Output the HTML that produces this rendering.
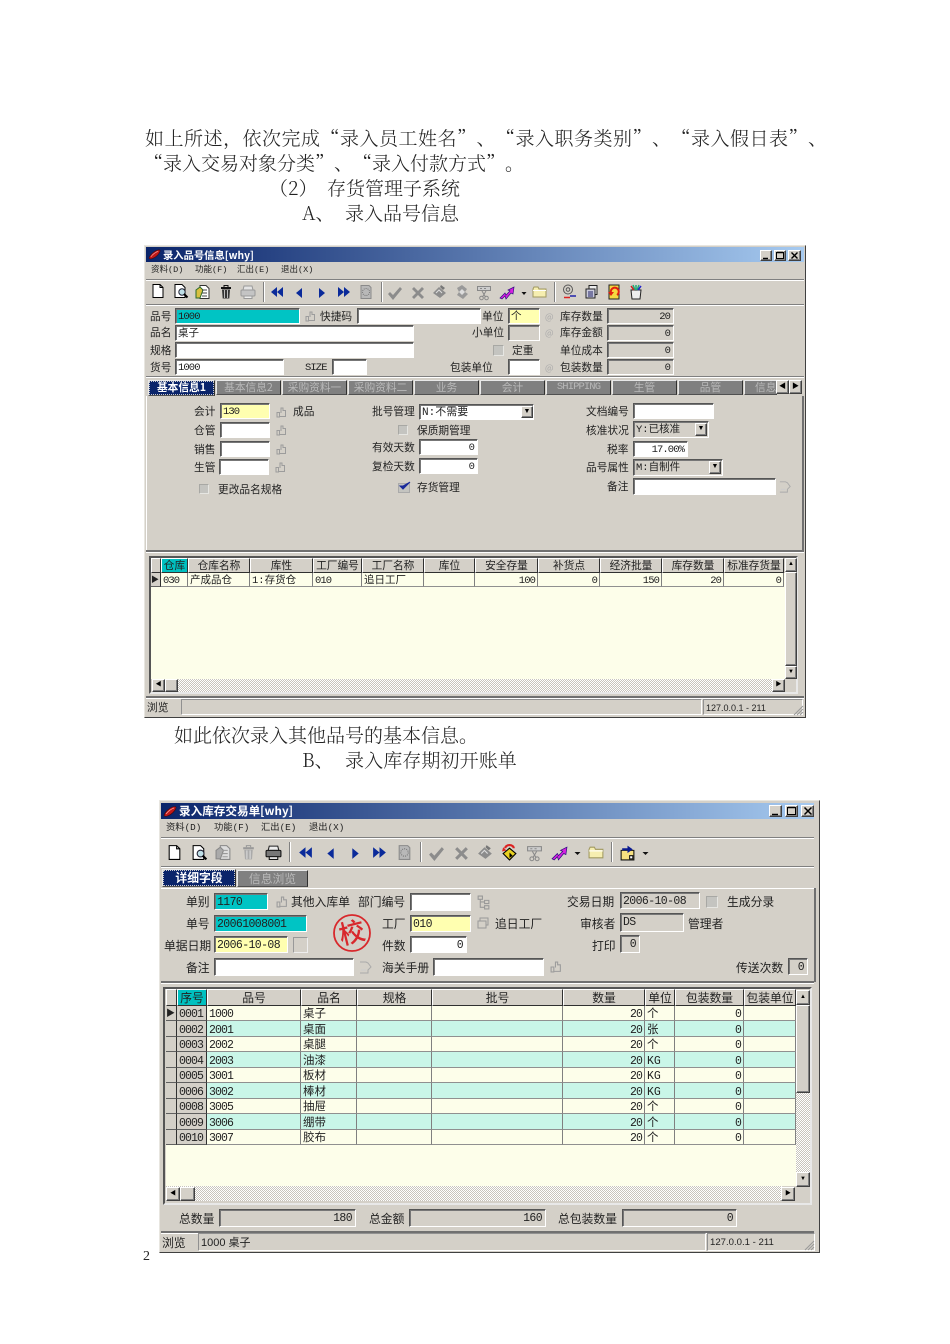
<!DOCTYPE html>
<html lang="zh-CN"><head><meta charset="utf-8"><title>存货管理子系统</title>
<style>
html,body{margin:0;padding:0;background:#fff}
body{position:relative;width:950px;height:1344px;overflow:hidden;font-family:"Liberation Sans","Noto Sans CJK SC",sans-serif}
.b{position:absolute;font:19px/24px "Noto Serif CJK SC",serif;color:#222;white-space:pre;margin-top:-12px;font-weight:300;text-spacing-trim:space-all}
.q{font-feature-settings:"fwid"}
.win{position:absolute;box-sizing:border-box;background:#d4d0c8;border:1px solid;border-color:#e8e6e0 #404040 #404040 #e8e6e0}
.a,.l,.f,.o,.tab{position:absolute}
.w1,.w2,svg.ic{filter:blur(.3px)}
.l{line-height:14px;margin-top:-6px;white-space:nowrap;color:#222;font-size:10.7px;font-family:"Noto Sans CJK SC",sans-serif}
.w2 .l{font-size:11.8px}
.mn{font-family:"Liberation Mono","Noto Sans CJK SC",monospace!important}
.m{font-family:"Liberation Mono",monospace;font-size:10.5px;letter-spacing:-.9px}
.title{position:absolute;background:linear-gradient(90deg,#0a246a,#a6caf0)}
.f{box-sizing:border-box;border:1px solid;border-color:#555 #fff #fff #555;background:#fff;box-shadow:inset 1px 1px 0 #777;font:10.5px/14px "Liberation Mono","Noto Sans CJK SC",monospace;letter-spacing:-.9px;color:#222;padding:1px 0 0 2px;white-space:nowrap;overflow:hidden}
.w2 .f{font-size:11.5px;line-height:15px;letter-spacing:-.6px}
.z{letter-spacing:0!important}
.y{background:#ffffb0}.c{background:#00c4c4}.g{background:#d4d0c8}
.r{text-align:right;padding:1px 3px 0 0}
.bt{position:absolute;box-sizing:border-box;background:#d4d0c8;border:1px solid;border-color:#fff #404040 #404040 #fff;box-shadow:inset -1px -1px 0 #808080;font:8px/9px "Liberation Sans",sans-serif;text-align:center;color:#000}
.hr{position:absolute;height:1px;background:#808080;box-shadow:0 1px 0 #fff}
.vr{position:absolute;width:1px;background:#808080;box-shadow:1px 0 0 #fff}
.tab{box-sizing:border-box;background:#808080;color:#b8b8b8;text-align:center;border:1px solid;border-color:#e8e8e8 #303030 #505050 #e8e8e8;font:10.7px/13px "Noto Sans CJK SC",sans-serif;white-space:nowrap;overflow:hidden}
.w2 .tab{font-size:11.8px;line-height:15px}
.sel{background:#0a246a;color:#fff;font-weight:700;outline:1px dotted #ccc;outline-offset:-2px}
.cb{position:absolute;box-sizing:border-box;background:#c4c4c0;border:1px solid #e6e6e2;border-top-color:#a8a8a4;border-left-color:#a8a8a4}
.fr{position:absolute;box-sizing:border-box;border:2px solid;border-color:#555 #e8e8e8 #e8e8e8 #555;background:#d4d0c8}
.dz{position:absolute;background:repeating-conic-gradient(#fff 0 25%,#c8c4bc 0 50%) 0 0/2px 2px}
table{position:absolute;border-collapse:separate;border-spacing:0;table-layout:fixed;font-family:"Liberation Mono","Noto Sans CJK SC",monospace;color:#222}
td,th{padding:0 2px;overflow:hidden;white-space:nowrap;box-sizing:border-box;font-weight:400;border-right:1px solid #808080;border-bottom:1px solid #909090;background:#fdfeea}
.w1 td{font-size:10.5px;line-height:10px;padding-top:3px;letter-spacing:-.9px}
.w2 td{font-size:11.5px;line-height:11px;padding-top:3px;letter-spacing:-.9px}
.w1 td:nth-child(3),.w1 td:nth-child(4),.w1 td:nth-child(6),.w2 td:nth-child(4),.w2 td:nth-child(8){letter-spacing:0}
th{background:#d4d0c8;border-top:1px solid #fff;border-left:1px solid #fff;border-right:1px solid #303030;border-bottom:1px solid #303030;font:10.7px/13px "Noto Sans CJK SC",sans-serif;text-align:center;padding:0}
.w2 th{font-size:11.8px}
th.k{background:#00c0c0}
td.h{background:#d4d0c8;border-right:1px solid #303030;border-bottom:1px solid #606060;padding-left:2px;padding-right:1px}
td.n{text-align:right}
tr.t td{background:#c9f6e8}
tr.t td.h{background:#d4d0c8}
svg.ic{position:absolute;left:0;top:0}
</style></head>
<body>
<div class="b q" style="left:145px;top:138px;letter-spacing:.5px">如上所述，依次完成“录入员工姓名”、“录入职务类别”、“录入假日表”、</div>
<div class="b q" style="left:144px;top:163px">“录入交易对象分类”、“录入付款方式”。</div>
<div class="b" style="left:269px;top:188px">（2）</div>
<div class="b" style="left:327px;top:188px">存货管理子系统</div>
<div class="b" style="left:302px;top:213px">A、</div>
<div class="b" style="left:345px;top:213px">录入品号信息</div>
<div class="b" style="left:174px;top:735px">如此依次录入其他品号的基本信息。</div>
<div class="b" style="left:302px;top:760px">B、</div>
<div class="b" style="left:345px;top:760px;letter-spacing:.1px">录入库存期初开账单</div>
<div class="b" style="left:143px;top:1257px;font:14px/24px 'Liberation Serif',serif;font-weight:400">2</div>

<!-- WINDOW 1 -->
<div class="win" style="left:144px;top:245px;width:662px;height:473px"></div>
<div class="w1">
<div class="title" style="left:146px;top:247px;width:658px;height:15px"></div>
<div class="l" style="left:163px;top:254px;color:#fff;font-weight:700;font-size:10.3px">录入品号信息[why]</div>
<div class="bt" style="left:760px;top:250px;width:12px;height:11px"></div>
<div class="bt" style="left:774px;top:250px;width:12px;height:11px"></div>
<div class="bt" style="left:788px;top:250px;width:13px;height:11px"></div>
<div class="l mn" style="left:151px;top:269px;font-size:8.5px">资料(D)</div>
<div class="l mn" style="left:195px;top:269px;font-size:8.5px">功能(F)</div>
<div class="l mn" style="left:237px;top:269px;font-size:8.5px">汇出(E)</div>
<div class="l mn" style="left:281px;top:269px;font-size:8.5px">退出(X)</div>
<div class="hr" style="left:146px;top:279px;width:658px"></div>
<div class="hr" style="left:146px;top:304px;width:658px"></div>
<div class="vr" style="left:263px;top:282px;height:20px"></div>
<div class="vr" style="left:381px;top:282px;height:20px"></div>
<div class="vr" style="left:554px;top:282px;height:20px"></div>

<div class="l" style="left:150px;top:316px">品号</div><div class="f c" style="left:175px;top:308px;width:125px;height:16px">1000</div>
<div class="l" style="left:320px;top:316px">快捷码</div><div class="f" style="left:357px;top:308px;width:124px;height:16px"></div>
<div class="l" style="left:482px;top:316px">单位</div><div class="f y z" style="left:508px;top:308px;width:32px;height:16px">个</div>
<div class="l" style="left:545px;top:316px;color:#aaa;font-size:9px">@</div>
<div class="l" style="left:560px;top:316px">库存数量</div><div class="f g r" style="left:607px;top:308px;width:67px;height:16px">20</div>

<div class="l" style="left:150px;top:332px">品名</div><div class="f z" style="left:175px;top:325px;width:239px;height:16px">桌子</div>
<div class="l" style="left:472px;top:332px">小单位</div><div class="f g" style="left:508px;top:325px;width:32px;height:16px"></div>
<div class="l" style="left:545px;top:332px;color:#aaa;font-size:9px">@</div>
<div class="l" style="left:560px;top:332px">库存金额</div><div class="f g r" style="left:607px;top:325px;width:67px;height:16px">0</div>

<div class="l" style="left:150px;top:350px">规格</div><div class="f" style="left:175px;top:342px;width:239px;height:16px"></div>
<div class="cb" style="left:493px;top:345px;width:11px;height:11px"></div><div class="l" style="left:512px;top:350px">定重</div>
<div class="l" style="left:560px;top:350px">单位成本</div><div class="f g r" style="left:607px;top:342px;width:67px;height:16px">0</div>

<div class="l" style="left:150px;top:367px">货号</div><div class="f" style="left:175px;top:359px;width:109px;height:16px">1000</div>
<div class="l m" style="left:305px;top:367px">SIZE</div><div class="f" style="left:332px;top:359px;width:35px;height:16px"></div>
<div class="l" style="left:450px;top:367px">包装单位</div><div class="f" style="left:508px;top:359px;width:32px;height:16px"></div>
<div class="l" style="left:545px;top:367px;color:#aaa;font-size:9px">@</div>
<div class="l" style="left:560px;top:367px">包装数量</div><div class="f g r" style="left:607px;top:359px;width:67px;height:16px">0</div>
<div class="hr" style="left:146px;top:376px;width:658px"></div>

<div class="tab sel" style="left:148px;top:380px;width:67px;height:16px">基本信息1</div>
<div class="tab" style="left:216px;top:380px;width:65px;height:15px">基本信息2</div>
<div class="tab" style="left:282px;top:380px;width:65px;height:15px">采购资料一</div>
<div class="tab" style="left:348px;top:380px;width:65px;height:15px">采购资料二</div>
<div class="tab" style="left:414px;top:380px;width:65px;height:15px">业务</div>
<div class="tab" style="left:480px;top:380px;width:65px;height:15px">会计</div>
<div class="tab" style="left:546px;top:380px;width:65px;height:15px;font-family:'Liberation Mono',monospace;font-size:10.5px;letter-spacing:-.9px">SHIPPING</div>
<div class="tab" style="left:612px;top:380px;width:65px;height:15px">生管</div>
<div class="tab" style="left:678px;top:380px;width:65px;height:15px">品管</div>
<div class="tab" style="left:744px;top:380px;width:33px;height:15px;text-align:left;padding-left:10px">信息</div>
<div class="bt" style="left:776px;top:380px;width:13px;height:14px;font-size:7px;line-height:12px">◀</div>
<div class="bt" style="left:789px;top:380px;width:13px;height:14px;font-size:7px;line-height:12px">▶</div>
<div class="a" style="left:146px;top:396px;width:1px;height:154px;background:#fff"></div>
<div class="a" style="left:802px;top:396px;width:2px;height:154px;background:#707070"></div>

<div class="l" style="left:194px;top:411px">会计</div><div class="f y" style="left:220px;top:403px;width:50px;height:16px">130</div><div class="l" style="left:293px;top:411px">成品</div>
<div class="l" style="left:194px;top:430px">仓管</div><div class="f" style="left:220px;top:422px;width:50px;height:16px"></div>
<div class="l" style="left:194px;top:449px">销售</div><div class="f" style="left:220px;top:441px;width:50px;height:16px"></div>
<div class="l" style="left:194px;top:467px">生管</div><div class="f" style="left:219px;top:459px;width:50px;height:16px"></div>
<div class="cb" style="left:199px;top:484px;width:10px;height:10px"></div><div class="l" style="left:218px;top:489px">更改品名规格</div>

<div class="l" style="left:372px;top:411px">批号管理</div><div class="f z" style="left:419px;top:404px;width:115px;height:16px;font-size:11px">N:不需要</div>
<div class="bt" style="left:521px;top:406px;width:12px;height:12px;line-height:10px;font-size:7px">▼</div>
<div class="cb" style="left:398px;top:425px;width:10px;height:10px"></div><div class="l" style="left:417px;top:430px">保质期管理</div>
<div class="l" style="left:372px;top:447px">有效天数</div><div class="f r" style="left:419px;top:439px;width:59px;height:16px">0</div>
<div class="l" style="left:372px;top:466px">复检天数</div><div class="f r" style="left:419px;top:458px;width:59px;height:16px">0</div>
<div class="l" style="left:417px;top:487px">存货管理</div>

<div class="l" style="left:586px;top:411px">文档编号</div><div class="f" style="left:633px;top:403px;width:81px;height:16px"></div>
<div class="l" style="left:586px;top:430px">核准状况</div><div class="f g z" style="left:633px;top:421px;width:76px;height:17px">Y:已核准</div>
<div class="bt" style="left:695px;top:423px;width:12px;height:13px;line-height:10px;font-size:7px">▼</div>
<div class="l" style="left:607px;top:449px">税率</div><div class="f r" style="left:633px;top:441px;width:55px;height:16px">17.00%</div>
<div class="l" style="left:586px;top:467px">品号属性</div><div class="f g z" style="left:633px;top:459px;width:90px;height:17px">M:自制件</div>
<div class="bt" style="left:709px;top:461px;width:12px;height:13px;line-height:10px;font-size:7px">▼</div>
<div class="l" style="left:607px;top:486px">备注</div><div class="f" style="left:633px;top:478px;width:143px;height:17px"></div>

<div class="hr" style="left:146px;top:550px;width:658px;height:2px;background:#707070"></div>
<div class="fr" style="left:149px;top:556px;width:649px;height:138px"></div>
<div class="a" style="left:151px;top:573px;width:634px;height:106px;background:#fdfeea"></div>
<table style="left:151px;top:558px;width:633px">
<colgroup><col style="width:10px"><col style="width:27px"><col style="width:62px"><col style="width:63px"><col style="width:49px"><col style="width:62px"><col style="width:51px"><col style="width:63px"><col style="width:62px"><col style="width:62px"><col style="width:62px"><col style="width:60px"></colgroup>
<tr style="height:15px"><th></th><th class="k">仓库</th><th>仓库名称</th><th>库性</th><th>工厂编号</th><th>工厂名称</th><th>库位</th><th>安全存量</th><th>补货点</th><th>经济批量</th><th>库存数量</th><th>标准存货量</th></tr>
<tr style="height:14px"><td class="h" style="font-size:8px;padding:2px 0 0">▶</td><td>030</td><td>产成品仓</td><td>1:存货仓</td><td>010</td><td>追日工厂</td><td></td><td class="n">100</td><td class="n">0</td><td class="n">150</td><td class="n">20</td><td class="n">0</td></tr>
</table>
<div class="bt" style="left:785px;top:558px;width:12px;height:14px;font-size:6px;line-height:11px">▲</div>
<div class="bt" style="left:785px;top:572px;width:12px;height:94px"></div>
<div class="bt" style="left:785px;top:666px;width:12px;height:13px;font-size:6px;line-height:11px">▼</div>
<div class="dz" style="left:152px;top:679px;width:620px;height:13px"></div>
<div class="bt" style="left:152px;top:679px;width:13px;height:13px;font-size:6px;line-height:11px">◀</div>
<div class="bt" style="left:165px;top:679px;width:13px;height:13px"></div>
<div class="bt" style="left:772px;top:679px;width:13px;height:13px;font-size:6px;line-height:11px">▶</div>
<div class="hr" style="left:146px;top:696px;width:658px;height:2px;background:#707070"></div>
<div class="l" style="left:147px;top:707px">浏览</div>
<div class="f g" style="left:181px;top:699px;width:521px;height:16px;box-shadow:none;border-color:#909090 #fff #fff #909090"></div>
<div class="f g z" style="left:703px;top:699px;width:100px;height:16px;box-shadow:none;border-color:#909090 #fff #fff #909090;font:9px/14px 'Liberation Sans',sans-serif">127.0.0.1 - 211</div>
</div>

<!-- WINDOW 2 -->
<div class="win" style="left:159px;top:800px;width:661px;height:453px"></div>
<div class="w2">
<div class="title" style="left:161px;top:803px;width:653px;height:16px"></div>
<div class="l" style="left:179px;top:810px;color:#fff;font-weight:700;font-size:11.6px">录入库存交易单[why]</div>
<div class="bt" style="left:769px;top:805px;width:13px;height:12px"></div>
<div class="bt" style="left:785px;top:805px;width:13px;height:12px"></div>
<div class="bt" style="left:801px;top:805px;width:13px;height:12px"></div>
<div class="l mn" style="left:166px;top:827px;font-size:9.3px">资料(D)</div>
<div class="l mn" style="left:214px;top:827px;font-size:9.3px">功能(F)</div>
<div class="l mn" style="left:261px;top:827px;font-size:9.3px">汇出(E)</div>
<div class="l mn" style="left:309px;top:827px;font-size:9.3px">退出(X)</div>
<div class="hr" style="left:161px;top:837px;width:653px"></div>
<div class="hr" style="left:161px;top:866px;width:653px"></div>
<div class="vr" style="left:289px;top:842px;height:20px"></div>
<div class="vr" style="left:420px;top:842px;height:20px"></div>
<div class="vr" style="left:611px;top:842px;height:20px"></div>
<div class="tab sel" style="left:162px;top:869px;width:74px;height:18px;line-height:16px">详细字段</div>
<div class="tab" style="left:237px;top:870px;width:71px;height:17px">信息浏览</div>
<div class="a" style="left:161px;top:888px;width:653px;height:1px;background:#fff"></div>
<div class="a" style="left:814px;top:888px;width:2px;height:94px;background:#707070"></div>

<div class="l" style="left:186px;top:901px">单别</div><div class="f c" style="left:214px;top:893px;width:54px;height:17px">1170</div>
<div class="l" style="left:291px;top:901px">其他入库单</div>
<div class="l" style="left:358px;top:901px">部门编号</div><div class="f" style="left:410px;top:893px;width:61px;height:18px"></div>
<div class="l" style="left:567px;top:901px">交易日期</div><div class="f g" style="left:620px;top:892px;width:80px;height:17px">2006-10-08</div>
<div class="cb" style="left:706px;top:896px;width:12px;height:12px"></div><div class="l" style="left:727px;top:901px">生成分录</div>

<div class="l" style="left:186px;top:923px">单号</div><div class="f c" style="left:214px;top:915px;width:93px;height:17px">20061008001</div>
<div class="l" style="left:382px;top:923px">工厂</div><div class="f y" style="left:410px;top:915px;width:61px;height:17px">010</div>
<div class="l" style="left:495px;top:923px">追日工厂</div>
<div class="l" style="left:580px;top:923px">审核者</div><div class="f g" style="left:620px;top:913px;width:64px;height:19px">DS</div><div class="l" style="left:688px;top:923px">管理者</div>

<div class="l" style="left:164px;top:945px">单据日期</div><div class="f y" style="left:214px;top:936px;width:74px;height:17px">2006-10-08</div>
<div class="f g" style="left:293px;top:937px;width:15px;height:16px;border-color:#999 #eee #eee #999;box-shadow:none"></div>
<div class="l" style="left:382px;top:945px">件数</div><div class="f r" style="left:410px;top:936px;width:57px;height:17px">0</div>
<div class="l" style="left:592px;top:945px">打印</div><div class="f g r" style="left:620px;top:935px;width:20px;height:18px">0</div>

<div class="l" style="left:186px;top:967px">备注</div><div class="f" style="left:214px;top:958px;width:140px;height:18px"></div>
<div class="l" style="left:382px;top:967px">海关手册</div><div class="f" style="left:433px;top:958px;width:111px;height:18px"></div>
<div class="l" style="left:736px;top:967px">传送次数</div><div class="f g r" style="left:788px;top:958px;width:20px;height:17px">0</div>
<div class="hr" style="left:161px;top:981px;width:653px;height:2px;background:#707070"></div>

<div class="fr" style="left:163px;top:987px;width:649px;height:218px"></div>
<div class="a" style="left:166px;top:1005px;width:630px;height:181px;background:#fdfeea"></div>
<table style="left:166px;top:989px;width:630px">
<colgroup><col style="width:11px"><col style="width:30px"><col style="width:94px"><col style="width:56px"><col style="width:75px"><col style="width:131px"><col style="width:82px"><col style="width:30px"><col style="width:69px"><col style="width:52px"></colgroup>
<tr style="height:17px"><th></th><th class="k">序号</th><th>品号</th><th>品名</th><th>规格</th><th>批号</th><th>数量</th><th>单位</th><th>包装数量</th><th>包装单位</th></tr>
<tr style="height:15px"><td class="h" style="font-size:9px;padding:2px 0 0">▶</td><td class="h">0001</td><td>1000</td><td>桌子</td><td></td><td></td><td class="n">20</td><td>个</td><td class="n">0</td><td></td></tr>
<tr class="t" style="height:16px"><td class="h"></td><td class="h">0002</td><td>2001</td><td>桌面</td><td></td><td></td><td class="n">20</td><td>张</td><td class="n">0</td><td></td></tr>
<tr style="height:15px"><td class="h"></td><td class="h">0003</td><td>2002</td><td>桌腿</td><td></td><td></td><td class="n">20</td><td>个</td><td class="n">0</td><td></td></tr>
<tr class="t" style="height:16px"><td class="h"></td><td class="h">0004</td><td>2003</td><td>油漆</td><td></td><td></td><td class="n">20</td><td>KG</td><td class="n">0</td><td></td></tr>
<tr style="height:15px"><td class="h"></td><td class="h">0005</td><td>3001</td><td>板材</td><td></td><td></td><td class="n">20</td><td>KG</td><td class="n">0</td><td></td></tr>
<tr class="t" style="height:16px"><td class="h"></td><td class="h">0006</td><td>3002</td><td>棒材</td><td></td><td></td><td class="n">20</td><td>KG</td><td class="n">0</td><td></td></tr>
<tr style="height:15px"><td class="h"></td><td class="h">0008</td><td>3005</td><td>抽屉</td><td></td><td></td><td class="n">20</td><td>个</td><td class="n">0</td><td></td></tr>
<tr class="t" style="height:16px"><td class="h"></td><td class="h">0009</td><td>3006</td><td>绷带</td><td></td><td></td><td class="n">20</td><td>个</td><td class="n">0</td><td></td></tr>
<tr style="height:15px"><td class="h"></td><td class="h">0010</td><td>3007</td><td>胶布</td><td></td><td></td><td class="n">20</td><td>个</td><td class="n">0</td><td></td></tr>
</table>
<div class="dz" style="left:796px;top:1005px;width:14px;height:168px"></div>
<div class="bt" style="left:796px;top:990px;width:14px;height:15px;font-size:6px;line-height:12px">▲</div>
<div class="bt" style="left:796px;top:1005px;width:14px;height:88px"></div>
<div class="bt" style="left:796px;top:1172px;width:14px;height:15px;font-size:6px;line-height:12px">▼</div>
<div class="dz" style="left:166px;top:1186px;width:616px;height:15px"></div>
<div class="bt" style="left:166px;top:1187px;width:14px;height:14px;font-size:6px;line-height:12px">◀</div>
<div class="bt" style="left:180px;top:1187px;width:15px;height:14px"></div>
<div class="bt" style="left:781px;top:1187px;width:14px;height:14px;font-size:6px;line-height:12px">▶</div>

<div class="l" style="left:179px;top:1218px">总数量</div><div class="f g r" style="left:219px;top:1209px;width:137px;height:18px">180</div>
<div class="l" style="left:369px;top:1218px">总金额</div><div class="f g r" style="left:409px;top:1209px;width:137px;height:18px">160</div>
<div class="l" style="left:558px;top:1218px">总包装数量</div><div class="f g r" style="left:622px;top:1209px;width:115px;height:18px">0</div>
<div class="hr" style="left:161px;top:1231px;width:653px;height:2px;background:#707070"></div>
<div class="l" style="left:162px;top:1242px">浏览</div>
<div class="f g z" style="left:198px;top:1233px;width:508px;height:18px;box-shadow:none;border-color:#909090 #fff #fff #909090;font:11px/16px 'Liberation Sans','Noto Sans CJK SC',sans-serif">1000 桌子</div>
<div class="f g z" style="left:707px;top:1233px;width:108px;height:18px;box-shadow:none;border-color:#909090 #fff #fff #909090;font:9.6px/16px 'Liberation Sans',sans-serif">127.0.0.1 - 211</div>
</div>

<svg class="ic" width="950" height="1344" viewBox="0 0 950 1344" xmlns="http://www.w3.org/2000/svg">
<defs>
<symbol id="doc" viewBox="0 0 16 16"><path d="M3 1.5h7l3 3v10H3z" fill="#fff" stroke="#000"/><path d="M10 1.5v3h3" fill="none" stroke="#000"/></symbol>
<symbol id="pre" viewBox="0 0 16 16"><path d="M2 1.5h7l3 3v10H2z" fill="#fff" stroke="#000"/><circle cx="9" cy="9" r="3.2" fill="#bfe0e8" stroke="#223"/><path d="M11 11l3.5 3.5" stroke="#000" stroke-width="2"/></symbol>
<symbol id="cop" viewBox="0 0 16 16"><path d="M5 1.5h6l3 3v10H5z" fill="#fff" stroke="#333"/><path d="M1 6l4-3 3 3-3 8H1z" fill="#d8c040" stroke="#2a6a2a"/><path d="M7 6h5M7 9h5M7 12h5" stroke="#444"/></symbol>
<symbol id="cop2" viewBox="0 0 16 16"><path d="M5 1.5h6l3 3v10H5z" fill="#ddd" stroke="#888"/><path d="M1 6l4-3 3 3-3 8H1z" fill="#aaa" stroke="#888"/><path d="M7 6h5M7 9h5M7 12h5" stroke="#999"/></symbol>
<symbol id="tr" viewBox="0 0 16 16"><path d="M3 4h10" stroke="#111" stroke-width="2"/><path d="M6 3V1.5h4V3" fill="none" stroke="#111"/><path d="M4 5.5h8l-.7 9H4.7z" fill="#333"/><path d="M6.5 6v8M9.500 6v8" stroke="#bbb"/></symbol>
<symbol id="tr2" viewBox="0 0 16 16"><path d="M3 4h10" stroke="#999" stroke-width="2"/><path d="M6 3V1.5h4V3" fill="none" stroke="#999"/><path d="M4 5.5h8l-.7 9H4.7z" fill="#aaa"/><path d="M6.5 6v8M9.500 6v8" stroke="#ddd"/></symbol>
<symbol id="pr" viewBox="0 0 16 16"><path d="M4 2h8l1 4H3z" fill="#e4e4e4" stroke="#999"/><rect x="1" y="6" width="14" height="6" rx="1" fill="#c4c4c4" stroke="#999"/><path d="M4 12h8v2.500H4z" fill="#eee" stroke="#999"/></symbol>
<symbol id="pr2" viewBox="0 0 16 16"><path d="M4 2h8l1 4H3z" fill="#eee" stroke="#222"/><rect x="1" y="6" width="14" height="6" rx="1" fill="#777" stroke="#111"/><path d="M4 12h8v2.500H4z" fill="#fff" stroke="#111"/></symbol>
<symbol id="ff" viewBox="0 0 16 16"><path d="M8 3v10L2 8zM14 3v10L8 8z" fill="#0a2a9a"/></symbol>
<symbol id="pv" viewBox="0 0 16 16"><path d="M11 3v10L5 8z" fill="#0a2a9a"/></symbol>
<symbol id="nx" viewBox="0 0 16 16"><path d="M5 3v10l6-5z" fill="#0a2a9a"/></symbol>
<symbol id="ll" viewBox="0 0 16 16"><path d="M2 3v10l6-5zM8 3v10l6-5z" fill="#0a2a9a"/></symbol>
<symbol id="st" viewBox="0 0 16 16"><path d="M3 1.500h8l2 2v11H3z" fill="#b8b8b8" stroke="#8a8a8a"/><circle cx="8" cy="8" r="3.500" fill="none" stroke="#777" stroke-dasharray="1 1"/></symbol>
<symbol id="ck" viewBox="0 0 16 16"><path d="M1 9l2-2 3 3 7-8 2 2-9 11z" fill="#8c8c8c"/></symbol>
<symbol id="xx" viewBox="0 0 16 16"><path d="M2 4l2-2 4 4 4-4 2 2-4 4 4 4-2 2-4-4-4 4-2-2 4-4z" fill="#8c8c8c"/></symbol>
<symbol id="dm" viewBox="0 0 16 16"><path d="M1 9l6-6 7 6-6 5z" fill="#8c8c8c"/><path d="M9 1l4 3-2 2-3-3z" fill="#777"/><path d="M4 9l3-3 3 3" stroke="#ddd" fill="none"/></symbol>
<symbol id="dm2" viewBox="0 0 16 16"><path d="M3 4l5-3 5 4-2 3 3 2-5 5-6-4 2-3z" fill="#999"/><path d="M5 8l3-3 3 3-3 3z" fill="#ddd"/></symbol>
<symbol id="dm3" viewBox="0 0 16 16"><path d="M2 9l6-5 6 5-6 6z" fill="#e8d020" stroke="#000"/><path d="M4 4a4 3 0 0 1 8 0" fill="none" stroke="#d22" stroke-width="2"/><path d="M2 3l3 3-4 1z" fill="#d22"/><path d="M8 8l3 3-3 2z" fill="#000"/></symbol>
<symbol id="sc" viewBox="0 0 16 16"><path d="M1.500 1.500h13v4h-13z" fill="#ccc" stroke="#888"/><path d="M6 6l3.500 6M10 6l-3.500 6" stroke="#888"/><circle cx="5.500" cy="13" r="1.800" fill="none" stroke="#888"/><circle cx="10.500" cy="13" r="1.800" fill="none" stroke="#888"/><path d="M4 3.500h2M8 3.500h2" stroke="#888"/></symbol>
<symbol id="ar" viewBox="0 0 16 16"><path d="M1 13l5-5 1 2 4-4-2-1 6-3-1 7-2-1-5 6-1-3-3 3z" fill="#d820e0" stroke="#301080" stroke-width=".7"/></symbol>
<symbol id="fo" viewBox="0 0 16 16"><path d="M1 5l1-2h4l1 2h7v8H1z" fill="#f6eeb0" stroke="#a09860"/><path d="M1 6.500h13" stroke="#fff"/></symbol>
<symbol id="at" viewBox="0 0 16 16"><circle cx="7" cy="5.500" r="4.500" fill="none" stroke="#555"/><circle cx="7" cy="5.500" r="1.800" fill="none" stroke="#555"/><path d="M9 12h6" stroke="#22a" stroke-width="1.500"/><path d="M3 13.500h6" stroke="#d22" stroke-width="1.500"/></symbol>
<symbol id="bk" viewBox="0 0 16 16"><path d="M5 1.500h8v9H5z" fill="#eee" stroke="#222"/><path d="M2 5h9v9H2z" fill="#ccd" stroke="#222"/><path d="M4 8h5M4 10h5M4 12h5" stroke="#226"/></symbol>
<symbol id="rd" viewBox="0 0 16 16"><path d="M3 1h10v14H3z" fill="#f5d840" stroke="#222"/><path d="M5 9a4 4 0 1 1 6 2" fill="none" stroke="#e02010" stroke-width="2"/><path d="M2 8h6l-3 4z" fill="#e02010"/></symbol>
<symbol id="cu" viewBox="0 0 16 16"><path d="M3 6h10l-1 9H4z" fill="#eee" stroke="#222"/><path d="M5 1l2 5M8 1v5M11 1L9 6" stroke="#2a7" stroke-width="1.500"/><path d="M3 2l3 4" stroke="#c22" stroke-width="1.500"/><path d="M13 2l-3 4" stroke="#22c" stroke-width="1.500"/></symbol>
<symbol id="bx" viewBox="0 0 16 16"><path d="M2 6h12v9H2z" fill="#f6e080" stroke="#111"/><path d="M3 4h5V1.500l5 3.500-5 3.500V6H3z" fill="#0a1a90"/><path d="M10 11h3v3h-3z" fill="#fff" stroke="#111"/></symbol>
<symbol id="hk" viewBox="0 0 11 11"><path d="M1 5.500h2.500V10H1zM3.500 9.500h6V3.500H7V1H5v5" fill="none" stroke="#9c9c9c"/></symbol>
<symbol id="hd" viewBox="0 0 16 16"><path d="M2 3h6l2 1 3 4-3 3v3H2" fill="none" stroke="#aaa"/><path d="M3 11h5" stroke="#ccc"/></symbol>
<symbol id="tre" viewBox="0 0 12 14"><path d="M1 1h4v3H1zM7 5h4v3H7zM7 10h4v3H7zM3 4v7.500h4M3 6.500h4" fill="none" stroke="#999"/></symbol>
<symbol id="fac" viewBox="0 0 12 12"><path d="M1 4h8v7H1zM3 4V1h8v7H9" fill="none" stroke="#999"/></symbol>
<symbol id="ti" viewBox="0 0 14 12"><path d="M1 10C2 6 8 1 12 1c2 0 1 3-2 6s-8 5-9 3z" fill="#c01818" stroke="#40080c" stroke-width=".6"/><path d="M3 8.500C5 6 8 3.500 11 2.500" stroke="#f4a0a0" stroke-width=".8" fill="none"/></symbol>
</defs>
<use href="#ti" x="148" y="249" width="13" height="11"/>
<use href="#ti" x="163" y="805" width="14" height="13"/>
<!-- window buttons -->
<g fill="none" stroke="#000">
<path d="M763 258.500h5" stroke-width="1.500"/><rect x="776.500" y="252.500" width="7" height="6"/><path d="M777 252.500h6" stroke-width="1.500"/>
<path d="M791.500 252.500l6 6M797.500 252.500l-6 6" stroke-width="1.400"/>
<path d="M772 814.500h6" stroke-width="1.500"/><rect x="787.500" y="807.500" width="8" height="7"/><path d="M788 807.500h7" stroke-width="1.500"/>
<path d="M804.500 807.500l7 7M811.500 807.500l-7 7" stroke-width="1.500"/>
</g>
<!-- toolbar 1 -->
<g>
<use href="#doc" x="150" y="283" width="16" height="16"/>
<use href="#pre" x="173" y="283" width="16" height="16"/>
<use href="#cop" x="195" y="284" width="16" height="16"/>
<use href="#tr" x="218" y="284" width="16" height="16"/>
<use href="#pr" x="240" y="284" width="16" height="16"/>
<use href="#ff" x="269" y="284" width="16" height="16"/>
<use href="#pv" x="291" y="285" width="16" height="16"/>
<use href="#nx" x="314" y="285" width="16" height="16"/>
<use href="#ll" x="336" y="284" width="16" height="16"/>
<use href="#st" x="358" y="284" width="16" height="16"/>
<use href="#ck" x="387" y="285" width="16" height="16"/>
<use href="#xx" x="410" y="285" width="16" height="16"/>
<use href="#dm" x="432" y="284" width="16" height="16"/>
<use href="#dm2" x="454" y="284" width="16" height="16"/>
<use href="#sc" x="476" y="285" width="16" height="16"/>
<use href="#ar" x="499" y="285" width="16" height="16"/>
<path d="M521.500 292h5l-2.500 3z" fill="#111"/>
<use href="#fo" x="532" y="284" width="16" height="16"/>
<use href="#at" x="561" y="284" width="16" height="16"/>
<use href="#bk" x="584" y="284" width="16" height="16"/>
<use href="#rd" x="606" y="284" width="16" height="16"/>
<use href="#cu" x="628" y="284" width="16" height="16"/>
</g>
<!-- small icons 1 -->
<use href="#hk" x="305" y="311" width="11" height="11"/>
<use href="#hk" x="276" y="407" width="11" height="11"/>
<use href="#hk" x="276" y="425" width="11" height="11"/>
<use href="#hk" x="276" y="444" width="11" height="11"/>
<use href="#hk" x="275" y="462" width="11" height="11"/>
<use href="#hd" x="778" y="479" width="15" height="15"/>
<rect x="398.500" y="483.500" width="11" height="9" fill="#c4c4c0" stroke="#aaa"/>
<path d="M400 486l3 3 7-7-7 4z" fill="#1a2a9a" stroke="#1a2a9a"/>
<path d="M798 715l6-6M801 715l3-3M795 715l9-9" stroke="#999" transform="translate(-1 0)"/>
<!-- toolbar 2 -->
<g>
<use href="#doc" x="166" y="844" width="17" height="17"/>
<use href="#pre" x="191" y="844" width="17" height="17"/>
<use href="#cop2" x="215" y="844" width="17" height="17"/>
<use href="#tr2" x="240" y="844" width="17" height="17"/>
<use href="#pr2" x="265" y="844" width="17" height="17"/>
<use href="#ff" x="297" y="844" width="17" height="17"/>
<use href="#pv" x="322" y="845" width="17" height="17"/>
<use href="#nx" x="347" y="845" width="17" height="17"/>
<use href="#ll" x="371" y="844" width="17" height="17"/>
<use href="#st" x="396" y="844" width="17" height="17"/>
<use href="#ck" x="428" y="845" width="17" height="17"/>
<use href="#xx" x="453" y="845" width="17" height="17"/>
<use href="#dm" x="477" y="844" width="17" height="17"/>
<use href="#dm3" x="501" y="844" width="17" height="17"/>
<use href="#sc" x="526" y="845" width="17" height="17"/>
<use href="#ar" x="551" y="845" width="17" height="17"/>
<path d="M574.500 852h6l-3 3z" fill="#111"/>
<use href="#fo" x="588" y="844" width="17" height="17"/>
<use href="#bx" x="619" y="844" width="17" height="17"/>
<path d="M642.500 852h6l-3 3z" fill="#111"/>
</g>
<use href="#hk" x="276" y="896" width="12" height="12"/>
<use href="#tre" x="477" y="895" width="13" height="15"/>
<use href="#fac" x="477" y="917" width="12" height="12"/>
<use href="#hd" x="358" y="959" width="16" height="16"/>
<use href="#hk" x="550" y="961" width="12" height="12"/>
<circle cx="352" cy="933" r="18" fill="none" stroke="#d8282c" stroke-width="1.800"/>
<text x="352" y="942" font-family="Noto Sans CJK SC,sans-serif" font-size="26" font-weight="500" fill="#d8282c" text-anchor="middle" transform="rotate(-14 352 933)">校</text>
<path d="M808 1250l6-6M811 1250l3-3M805 1250l9-9" stroke="#999"/>
</svg>
</body></html>
